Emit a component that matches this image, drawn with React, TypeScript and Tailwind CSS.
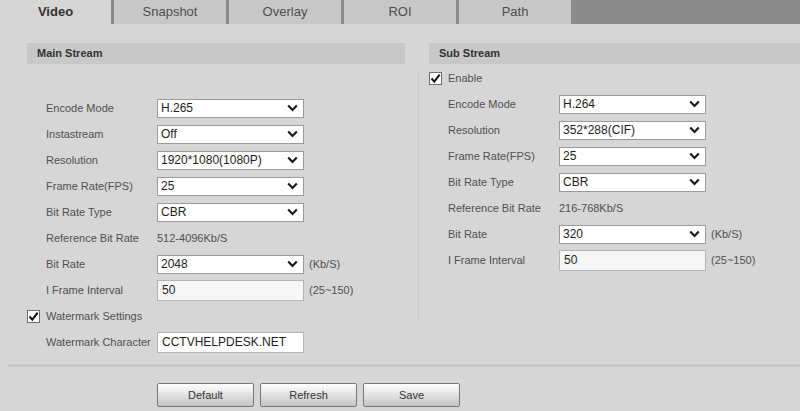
import React from 'react';

const tabs = ['Snapshot', 'Overlay', 'ROI', 'Path'];

function Chevron() {
  return (
    <svg width="11" height="8" viewBox="0 0 11 8" className="shrink-0">
      <polyline points="1.2,1.5 5.5,6 9.8,1.5" fill="none" stroke="#1a1a1a" strokeWidth="2.2" />
    </svg>
  );
}

function Check() {
  return (
    <span className="flex h-[13px] w-[13px] items-center justify-center border border-[#6f6f6f] bg-white">
      <svg width="11" height="11" viewBox="0 0 11 11">
        <polyline points="1.5,5.5 4.3,8.6 9.6,1.6" fill="none" stroke="#111" strokeWidth="2" />
      </svg>
    </span>
  );
}

function Select({ value }: { value: string }) {
  return (
    <div className="flex h-[19px] w-[147px] items-center justify-between border border-[#9a9a9a] bg-white pl-[3px] pr-[5px] text-[12px] text-[#1e1e1e]">
      <span>{value}</span>
      <Chevron />
    </div>
  );
}

function Input({ value, bg = 'bg-[#f6f6f6]' }: { value: string; bg?: string }) {
  return (
    <div className={`flex h-[21px] w-[147px] items-center border border-[#b4b4b4] pl-[4px] text-[12px] text-[#1e1e1e] ${bg}`}>
      {value}
    </div>
  );
}

function Row({ label, children, h = 'h-[26px]' }: { label: string; children?: React.ReactNode; h?: string }) {
  return (
    <div className={`flex ${h} items-center pl-[19px]`}>
      <span className="w-[111px] shrink-0 text-[11px] text-[#505050]">{label}</span>
      {children}
    </div>
  );
}

function Suffix({ text }: { text: string }) {
  return <span className="ml-[5px] text-[11px] text-[#505050]">{text}</span>;
}

function Header({ title }: { title: string }) {
  return (
    <div className="flex h-[21px] items-center bg-[#c8c8c8] pl-[10px] text-[11px] font-bold text-[#333]">
      {title}
    </div>
  );
}

export default function App() {
  return (
    <div className="h-[411px] w-[800px] overflow-hidden bg-[#d6d6d6] font-['Liberation_Sans',Arial,sans-serif]">
      {/* tab strip */}
      <div className="flex h-[24px] bg-[#8a8a8a]">
        <div className="flex w-[111px] items-center justify-center bg-[#d6d6d6] text-[13px] font-bold text-[#333]">Video</div>
        {tabs.map((t) => (
          <div
            key={t}
            className="ml-[3px] flex w-[112px] items-center justify-center bg-[#c7c7c7] text-[13px] text-[#4f4f4f]"
          >
            {t}
          </div>
        ))}
      </div>

      <div className="flex pt-[19px]">
        {/* main stream */}
        <div className="ml-[27px] w-[378px]">
          <Header title="Main Stream" />
          <div className="mt-[31px]">
            <Row label="Encode Mode"><Select value="H.265" /></Row>
            <Row label="Instastream"><Select value="Off" /></Row>
            <Row label="Resolution"><Select value="1920*1080(1080P)" /></Row>
            <Row label="Frame Rate(FPS)"><Select value="25" /></Row>
            <Row label="Bit Rate Type"><Select value="CBR" /></Row>
            <Row label="Reference Bit Rate">
              <span className="text-[11px] text-[#505050]">512-4096Kb/S</span>
            </Row>
            <Row label="Bit Rate"><Select value="2048" /><Suffix text="(Kb/S)" /></Row>
            <Row label="I Frame Interval"><Input value="50" /><Suffix text="(25~150)" /></Row>
            <div className="flex h-[26px] items-center">
              <Check />
              <span className="ml-[6px] text-[11px] text-[#505050]">Watermark Settings</span>
            </div>
            <Row label="Watermark Character"><Input value="CCTVHELPDESK.NET" bg="bg-white" /></Row>
          </div>
        </div>

        {/* divider */}
        <div className="ml-[13px] mt-[27px] h-[250px] w-px bg-[#c9c9c9]" />

        {/* sub stream */}
        <div className="ml-[10px] flex-1">
          <Header title="Sub Stream" />
          <div className="mt-[2px] flex h-[25px] items-center">
            <Check />
            <span className="ml-[6px] text-[11px] text-[#505050]">Enable</span>
          </div>
          <Row label="Encode Mode"><Select value="H.264" /></Row>
          <Row label="Resolution"><Select value="352*288(CIF)" /></Row>
          <Row label="Frame Rate(FPS)"><Select value="25" /></Row>
          <Row label="Bit Rate Type"><Select value="CBR" /></Row>
          <Row label="Reference Bit Rate">
            <span className="text-[11px] text-[#505050]">216-768Kb/S</span>
          </Row>
          <Row label="Bit Rate"><Select value="320" /><Suffix text="(Kb/S)" /></Row>
          <Row label="I Frame Interval"><Input value="50" /><Suffix text="(25~150)" /></Row>
        </div>
      </div>

      {/* separator */}
      <div className="ml-[8px] mt-[9px] h-[3px] bg-[#c8c8c8]" />

      {/* buttons */}
      <div className="mt-[16px] flex gap-[6px] pl-[157px]">
        {['Default', 'Refresh', 'Save'].map((b) => (
          <button
            key={b}
            className="h-[24px] w-[97px] rounded-[2px] border border-[#777] bg-gradient-to-b from-white to-[#c4c4c4] text-[11px] text-[#333]"
          >
            {b}
          </button>
        ))}
      </div>
    </div>
  );
}
